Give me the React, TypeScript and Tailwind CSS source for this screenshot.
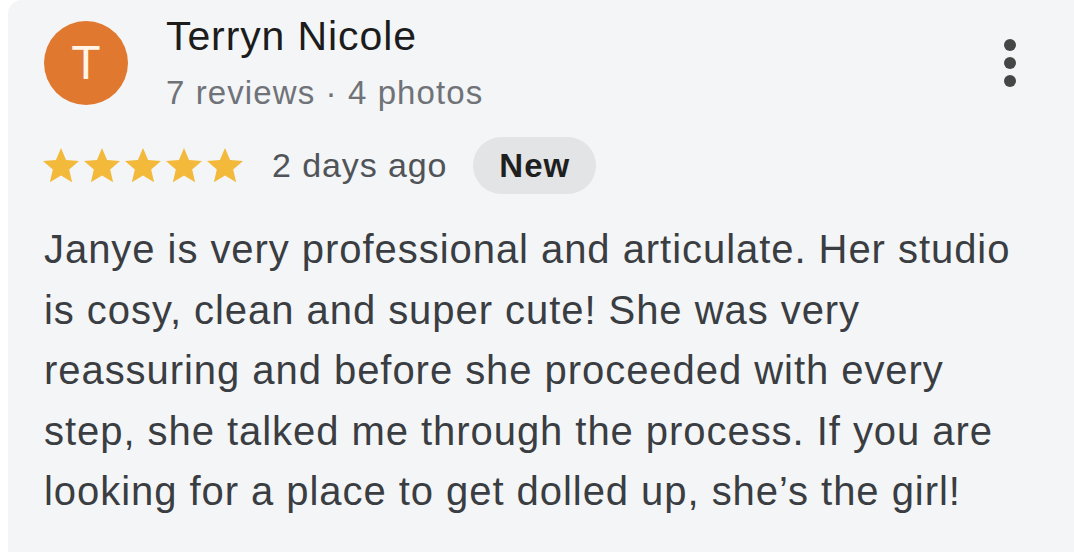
const Star = () => (
  <svg width="36" height="36" viewBox="2 2 20 20" className="fill-[#f3b93a]">
    <path d="M12 17.27L18.18 21l-1.64-7.03L22 9.24l-7.19-.61L12 2 9.19 8.63 2 9.24l5.46 4.73L5.82 21z" />
  </svg>
);

export default function App() {
  return (
    <div className="min-h-screen bg-white font-['Liberation_Sans',Arial,sans-serif]">
      <div className="ml-2 h-[552px] rounded-tl-[14px] bg-[#f4f5f7] pl-9">
        {/* header */}
        <div className="flex items-start pt-[12px] pr-[58px]">
          <div className="mt-[9px] flex h-[84px] w-[84px] shrink-0 items-center justify-center rounded-full bg-[#e0782f] text-[48px] font-light text-[#fff4e6]">
            T
          </div>
          <div className="ml-[38px] flex flex-col">
            <h2 className="text-[41px] leading-[48px] tracking-[0.9px] text-[#1c1c1c]">Terryn Nicole</h2>
            <p className="mt-[13px] text-[33px] leading-[40px] tracking-[1.1px] text-[#6f7378]">
              7 reviews · 4 photos
            </p>
          </div>
          <div className="ml-auto mt-[27px] flex flex-col gap-[6px]">
            <span className="h-3 w-3 rounded-full bg-[#444746]" />
            <span className="h-3 w-3 rounded-full bg-[#444746]" />
            <span className="h-3 w-3 rounded-full bg-[#444746]" />
          </div>
        </div>

        {/* rating row */}
        <div className="mt-[24px] flex h-[57px] items-center">
          <div className="-ml-px flex gap-[5px]">
            <Star />
            <Star />
            <Star />
            <Star />
            <Star />
          </div>
          <span className="ml-[29px] text-[34px] tracking-[0.9px] text-[#505458]">2 days ago</span>
          <span className="ml-[26px] flex h-[57px] items-center rounded-full bg-[#e3e4e6] px-[26px] text-[33px] font-semibold tracking-[1px] text-[#1f1f1f]">
            New
          </span>
        </div>

        {/* body */}
        <p className="mt-[25px] whitespace-nowrap text-[40px] leading-[60.5px] tracking-[0.95px] text-[#3a3d41]">
          Janye is very professional and articulate. Her studio
          <br />
          is cosy, clean and super cute! She was very
          <br />
          reassuring and before she proceeded with every
          <br />
          step, she talked me through the process. If you are
          <br />
          looking for a place to get dolled up, she’s the girl!
        </p>
      </div>
    </div>
  );
}
